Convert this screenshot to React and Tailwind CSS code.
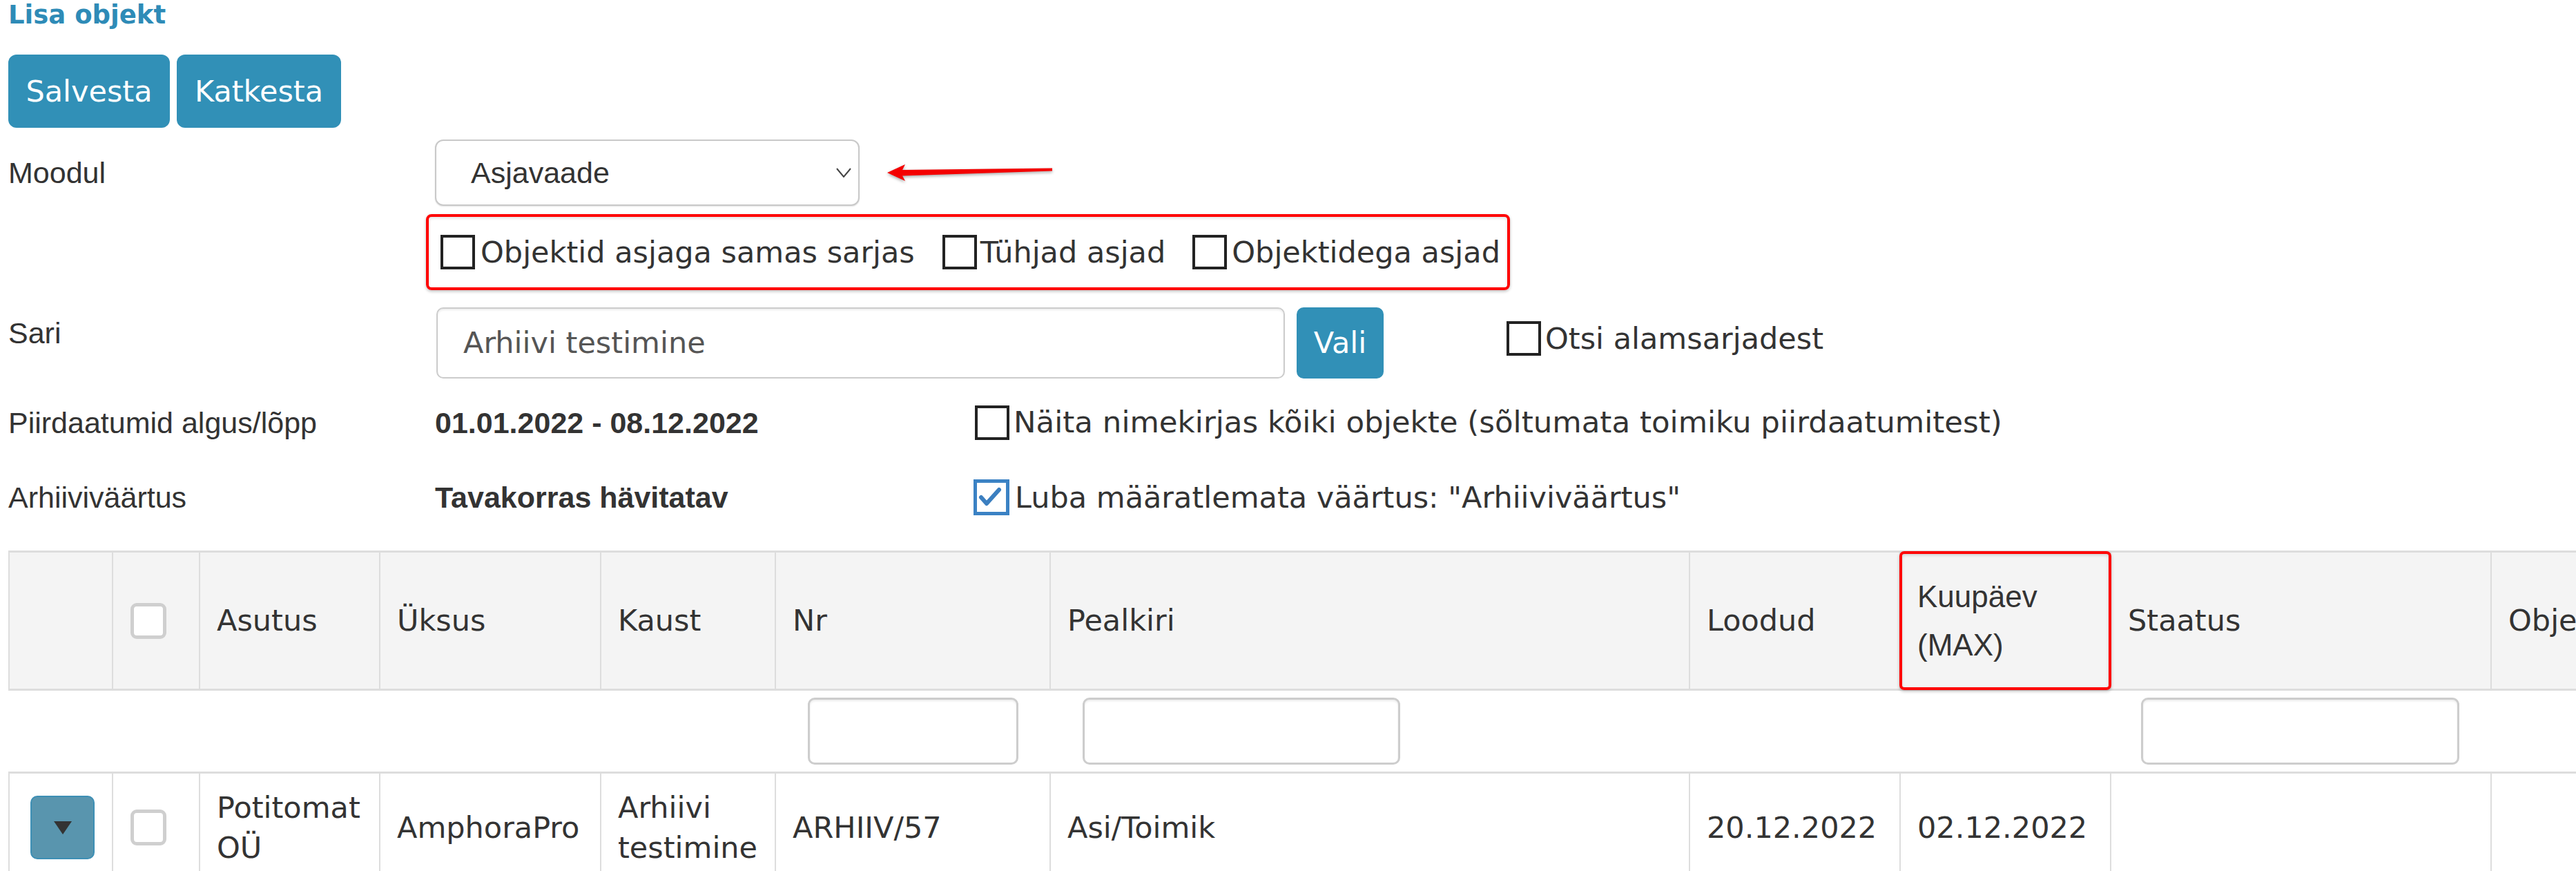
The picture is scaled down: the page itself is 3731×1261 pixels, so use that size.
import React from "react";

const DV = "font-['DejaVu_Sans',Verdana,sans-serif]";
const LB = "font-['Liberation_Sans',Arial,Helvetica,sans-serif]";

function Box({ checked }) {
  if (checked) {
    return (
      <span className="relative inline-block h-[52px] w-[52px] shrink-0 border-[5px] border-[#3b82c4] bg-white">
        <svg viewBox="0 0 42 42" className="absolute inset-0 h-[42px] w-[42px]">
          <path d="M6 21 L14 30 L32 10" fill="none" stroke="#3b7fc0" strokeWidth="6" strokeLinecap="round" strokeLinejoin="round" />
        </svg>
      </span>
    );
  }
  return <span className="inline-block h-[50px] w-[50px] shrink-0 border-[4px] border-[#222] bg-white" />;
}

function GrayBox() {
  return <span className="block h-[52px] w-[52px] rounded-[9px] border-[5px] border-[#cfcfcf] bg-white" />;
}

function FilterInput({ w, ml }) {
  return (
    <div
      className={`${w} ${ml} h-[97px] rounded-[10px] border-[3px] border-[#cdcdcd] bg-white shadow-[inset_0_2px_3px_rgba(0,0,0,0.08)]`}
    />
  );
}

export default function App() {
  const th = `border-x-2 border-y-[3px] border-[#dddddd] px-[24px] text-left align-middle font-normal text-[43px] text-[#333] ${DV}`;
  const td = `border-x-2 border-t-[3px] border-[#dddddd] px-[24px] text-left align-middle text-[43px] leading-[58px] text-[#333] ${DV}`;
  return (
    <div className="h-[1261px] w-[3731px] overflow-hidden bg-white pl-[12px]">
      <div className={`mt-[1px] text-[37px] leading-[42px] font-bold text-[#2e8bb7] ${DV}`}>Lisa objekt</div>

      <div className="mt-[36px] flex gap-[10px]">
        <button className={`h-[106px] w-[234px] rounded-[12px] bg-[#3190b7] text-[43px] text-white ${DV}`}>Salvesta</button>
        <button className={`h-[106px] w-[238px] rounded-[12px] bg-[#3190b7] text-[43px] text-white ${DV}`}>Katkesta</button>
      </div>

      {/* Moodul */}
      <div className="mt-[17px] flex h-[96px] items-center">
        <div className={`w-[618px] text-[43px] leading-[48px] text-[#333] ${LB}`}>Moodul</div>
        <div className="flex h-[96px] w-[615px] items-center justify-between rounded-[12px] border-2 border-[#c9c9c9] bg-white pl-[50px] pr-[10px] shadow-[0_1px_2px_rgba(0,0,0,0.12)]">
          <span className={`text-[43px] leading-[48px] text-[#333] ${LB}`}>Asjavaade</span>
          <svg viewBox="0 0 22 14" className="h-[14px] w-[22px]">
            <polyline points="1,1 11,13 21,1" fill="none" stroke="#444" strokeWidth="2" />
          </svg>
        </div>
        <svg viewBox="0 0 242 30" className="ml-[39px] h-[30px] w-[242px] drop-shadow-[0_2px_2px_rgba(0,0,0,0.35)]">
          <polygon points="1,15 27,3 23,11 240,8.5 240,12.5 23,19.5 27,27" fill="#f40000" />
        </svg>
      </div>

      {/* Red-framed checkboxes */}
      <div className="ml-[605px] mt-[12px] inline-flex h-[110px] items-center rounded-[8px] border-[4px] border-[#ff0000] pl-[17px] pr-[10px] shadow-[0_2px_4px_rgba(0,0,0,0.25),inset_0_2px_4px_rgba(0,0,0,0.12)]">
        <div className="flex items-center gap-[8px]">
          <Box />
          <span className={`text-[43px] leading-[52px] text-[#333] ${DV}`}>Objektid asjaga samas sarjas</span>
        </div>
        <div className="ml-[40px] flex items-center gap-[5px]">
          <Box />
          <span className={`text-[43px] leading-[52px] text-[#333] ${DV}`}>Tühjad asjad</span>
        </div>
        <div className="ml-[39px] flex items-center gap-[7px]">
          <Box />
          <span className={`text-[43px] leading-[52px] text-[#333] ${DV}`}>Objektidega asjad</span>
        </div>
      </div>

      {/* Sari */}
      <div className="mt-[25px] flex h-[103px]">
        <div className={`mt-[13px] w-[618px] self-start text-[43px] leading-[48px] text-[#333] ${LB}`}>Sari</div>
        <div className="ml-[2px] flex h-[103px] w-[1229px] items-center rounded-[10px] border-2 border-[#cccccc] bg-white pl-[37px] shadow-[inset_0_2px_3px_rgba(0,0,0,0.08)]">
          <span className={`text-[43px] text-[#555] ${DV}`}>Arhiivi testimine</span>
        </div>
        <button className={`ml-[17px] h-[103px] w-[126px] rounded-[10px] bg-[#3190b7] text-[43px] text-white ${DV}`}>Vali</button>
        <div className="ml-[178px] mt-[20px] flex h-[50px] items-center gap-[6px] self-start">
          <Box />
          <span className={`text-[43px] text-[#333] ${DV}`}>Otsi alamsarjadest</span>
        </div>
      </div>

      {/* Piirdaatumid */}
      <div className="mt-[32px] flex h-[64px] items-center">
        <div className={`w-[618px] text-[43px] leading-[48px] text-[#333] ${LB}`}>Piirdaatumid algus/lõpp</div>
        <div className={`w-[782px] text-[43px] leading-[48px] font-bold text-[#333] ${LB}`}>01.01.2022 - 08.12.2022</div>
        <div className="flex items-center gap-[6px]">
          <Box />
          <span className={`text-[43.5px] text-[#333] ${DV}`}>Näita nimekirjas kõiki objekte (sõltumata toimiku piirdaatumitest)</span>
        </div>
      </div>

      {/* Arhiiviväärtus */}
      <div className="mt-[44px] flex h-[64px] items-center">
        <div className={`w-[618px] text-[43px] leading-[48px] text-[#333] ${LB}`}>Arhiiviväärtus</div>
        <div className={`w-[780px] text-[43px] leading-[48px] font-bold text-[#333] ${LB}`}>Tavakorras hävitatav</div>
        <div className="flex items-center gap-[8px]">
          <Box checked />
          <span className={`text-[43px] text-[#333] ${DV}`}>Luba määratlemata väärtus: "Arhiiviväärtus"</span>
        </div>
      </div>

      {/* Table */}
      <table className="mt-[45px] w-[4000px] table-fixed border-collapse">
        <colgroup>
          <col className="w-[150px]" />
          <col className="w-[126px]" />
          <col className="w-[261px]" />
          <col className="w-[320px]" />
          <col className="w-[253px]" />
          <col className="w-[398px]" />
          <col className="w-[926px]" />
          <col className="w-[305px]" />
          <col className="w-[305px]" />
          <col className="w-[551px]" />
          <col className="w-[405px]" />
        </colgroup>
        <thead>
          <tr className="h-[200px] bg-[#f4f4f4]">
            <th className={th}></th>
            <th className={`${th} px-0 pl-[25px]`}>
              <GrayBox />
            </th>
            <th className={th}>Asutus</th>
            <th className={th}>Üksus</th>
            <th className={th}>Kaust</th>
            <th className={th}>Nr</th>
            <th className={th}>Pealkiri</th>
            <th className={th}>Loodud</th>
            <th className={`${th} relative`}>
              <div className={`text-[44px] leading-[70px] text-[#333] ${LB}`}>
                Kuupäev
                <br />
                (MAX)
              </div>
              <div className="pointer-events-none absolute -inset-[2px] rounded-[7px] border-[4px] border-[#ff0000] shadow-[0_2px_4px_rgba(0,0,0,0.25),inset_0_2px_4px_rgba(0,0,0,0.15)]" />
            </th>
            <th className={th}>Staatus</th>
            <th className={th}>Objektid</th>
          </tr>
        </thead>
        <tbody>
          <tr className="h-[120px]">
            <td colSpan={5} className="border-b-[3px] border-[#dddddd]"></td>
            <td className="border-b-[3px] border-[#dddddd] px-0 align-middle">
              <FilterInput w="w-[305px]" ml="ml-[47px]" />
            </td>
            <td className="border-b-[3px] border-[#dddddd] px-0 align-middle">
              <FilterInput w="w-[460px]" ml="ml-[47px]" />
            </td>
            <td colSpan={2} className="border-b-[3px] border-[#dddddd]"></td>
            <td className="border-b-[3px] border-[#dddddd] px-0 align-middle">
              <FilterInput w="w-[461px]" ml="ml-[44px]" />
            </td>
            <td className="border-b-[3px] border-[#dddddd]"></td>
          </tr>
          <tr className="h-[158px]">
            <td className={`${td} px-0 pl-[30px]`}>
              <div className="flex h-[92px] w-[93px] items-center justify-center rounded-[10px] border-2 border-[#3d8fb5] bg-[#5995ae]">
                <svg viewBox="0 0 26 19" className="h-[19px] w-[26px]">
                  <polygon points="0,0 26,0 13,19" fill="#333" />
                </svg>
              </div>
            </td>
            <td className={`${td} px-0 pl-[25px]`}>
              <GrayBox />
            </td>
            <td className={td}>
              Potitomat
              <br />
              OÜ
            </td>
            <td className={td}>AmphoraPro</td>
            <td className={td}>
              Arhiivi
              <br />
              testimine
            </td>
            <td className={td}>ARHIIV/57</td>
            <td className={td}>Asi/Toimik</td>
            <td className={td}>20.12.2022</td>
            <td className={td}>02.12.2022</td>
            <td className={td}></td>
            <td className={td}></td>
          </tr>
        </tbody>
      </table>
    </div>
  );
}
